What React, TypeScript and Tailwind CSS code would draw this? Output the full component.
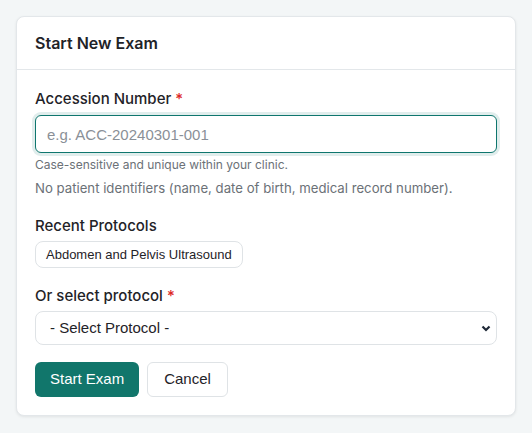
import React from "react";

export default function App() {
  return (
    <div className="min-h-[433px] w-full bg-[#f3f6f7] p-4 font-['Inter',sans-serif]">
      <div className="rounded-lg border border-[#e3e7ea] bg-white shadow-[0_1px_3px_rgba(0,0,0,0.08)]">
        <div className="flex h-[53px] items-center border-b border-[#e3e7ea] px-[18px]">
          <h2 className="text-[16px] font-semibold text-[#1f2328]">Start New Exam</h2>
        </div>
        <div className="px-[18px] pb-[18px] pt-[18px]">
          <label className="block text-[15px] font-medium leading-[22px] text-[#1f2328]">
            Accession Number <span className="text-[#dc2626]">*</span>
          </label>
          <input
            placeholder="e.g. ACC-20240301-001"
            className="mt-[5px] block h-[38px] w-full rounded-md border border-[#0f766e] bg-white px-[11px] font-['Liberation_Sans',Arial,sans-serif] text-[15px] text-[#1f2328] shadow-[0_0_0_3px_rgba(15,118,110,0.13)] outline-none placeholder:text-[#8a9097]"
          />
          <p className="mt-[3px] text-[12px] leading-[18px] text-[#6b7177]">
            Case-sensitive and unique within your clinic.
          </p>
          <p className="mt-[4px] text-[13.2px] leading-[20px] text-[#6b7177]">
            No patient identifiers (name, date of birth, medical record number).
          </p>
          <div className="mt-[17px] text-[15px] font-medium leading-[22px] text-[#1f2328]">Recent Protocols</div>
          <div className="mt-[4px] flex">
            <button className="h-[27px] rounded-lg border border-[#dfe3e6] bg-white px-[10px] font-['Liberation_Sans',Arial,sans-serif] text-[13px] text-[#1f2328]">
              Abdomen and Pelvis Ultrasound
            </button>
          </div>
          <label className="mt-[17px] block text-[15px] font-medium leading-[22px] text-[#1f2328]">
            Or select protocol <span className="text-[#dc2626]">*</span>
          </label>
          <div className="relative mt-[4px]">
            <select className="block h-[34px] w-full appearance-none rounded-lg border border-[#dfe3e6] bg-white px-[14px] font-['Liberation_Sans',Arial,sans-serif] text-[15px] text-[#1f2328] outline-none">
              <option>- Select Protocol -</option>
            </select>
            <svg
              className="pointer-events-none absolute right-[5px] top-1/2 -translate-y-1/2"
              width="12"
              height="12"
              viewBox="0 0 12 12"
            >
              <path d="M2.5 4.5 L6 8 L9.5 4.5" fill="none" stroke="#1f2937" strokeWidth="2.2" />
            </svg>
          </div>
          <div className="mt-[17px] flex gap-2">
            <button className="h-[35px] rounded-md bg-[#11766b] px-[15px] font-['Liberation_Sans',Arial,sans-serif] text-[15px] text-white">
              Start Exam
            </button>
            <button className="h-[35px] rounded-md border border-[#dfe3e6] bg-white px-[16px] font-['Liberation_Sans',Arial,sans-serif] text-[15px] font-medium text-[#1f2328]">
              Cancel
            </button>
          </div>
        </div>
      </div>
    </div>
  );
}
